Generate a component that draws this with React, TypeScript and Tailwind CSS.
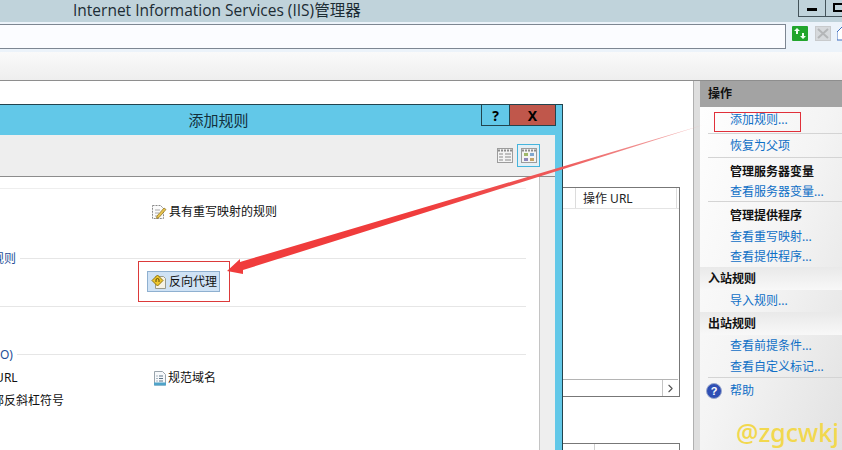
import type { ReactNode } from 'react';
import { ChevronRight } from 'lucide-react';

const cjk = "font-['Noto_Sans','Noto_Sans_CJK_SC',sans-serif]";

// Rows of the actions pane, heights picked so the text lands on the same lines
const actions: { label: string; kind: 'link' | 'sub' | 'head'; h: number; sep?: boolean }[] = [
  { label: '添加规则...', kind: 'link', h: 27, sep: true },
  { label: '恢复为父项', kind: 'link', h: 24, sep: true },
  { label: '管理服务器变量', kind: 'sub', h: 24 },
  { label: '查看服务器变量...', kind: 'link', h: 20, sep: true },
  { label: '管理提供程序', kind: 'sub', h: 25 },
  { label: '查看重写映射...', kind: 'link', h: 20 },
  { label: '查看提供程序...', kind: 'link', h: 20 },
  { label: '入站规则', kind: 'head', h: 23 },
  { label: '导入规则...', kind: 'link', h: 22 },
  { label: '出站规则', kind: 'head', h: 23 },
  { label: '查看前提条件...', kind: 'link', h: 22 },
  { label: '查看自定义标记...', kind: 'link', h: 21, sep: true },
];

function DocPencil() {
  return (
    <svg width="16" height="16" viewBox="0 0 16 16" className="shrink-0">
      <path d="M1.5 1.5h8l3 3v10h-11z" fill="#fbfbfb" stroke="#8a8a8a" strokeDasharray="2 1" />
      <path d="M4 6h5M4 9h4M4 12h3" stroke="#a8a8a8" />
      <path d="M6 12l7-8 2 1.5-7 8-2.5 1z" fill="#e8c44e" stroke="#8a6d1f" strokeWidth="0.7" />
    </svg>
  );
}

function DocSign() {
  return (
    <svg width="16" height="16" viewBox="0 0 16 16" className="shrink-0">
      <path d="M4.5 2.5h8l2 2v10h-10z" fill="#f6f2e4" stroke="#9a9a8a" />
      <path d="M6.5 1l5.5 5.5-5.5 5.5L1 6.500z" fill="#eec62c" stroke="#8d7412" />
      <path d="M5 8V6a1.500 1.500 0 0 1 3 0v2" fill="none" stroke="#5d4a08" />
    </svg>
  );
}

function DocList() {
  return (
    <svg width="14" height="15" viewBox="0 0 14 15" className="shrink-0">
      <path d="M1.500 .5h8l3 3v10.500h-11z" fill="#f7f9fb" stroke="#9aa4ac" />
      <path d="M3.500 5h1M6 5h4M3.500 7.500h1M6 7.500h4M3.500 10h1M6 10h4" stroke="#5c7488" />
      <rect x="1" y="11.500" width="12" height="3" fill="#4fa3c9" />
    </svg>
  );
}

function ViewToggle({ tiles }: { tiles?: boolean }) {
  return (
    <svg width="16" height="15" viewBox="0 0 16 15">
      <rect x=".5" y=".5" width="15" height="14" fill="#f4f4f4" stroke="#9c9c9c" />
      <path d="M1 2.500h14" stroke="#8c8c8c" strokeWidth="2" strokeDasharray="2 1" />
      {tiles ? (
        <g>
          <rect x="3" y="5" width="4" height="3" fill="#9fb86a" />
          <rect x="9" y="5" width="4" height="3" fill="#7fa7cf" />
          <rect x="3" y="10" width="4" height="3" fill="#8d86b8" />
          <rect x="9" y="10" width="4" height="3" fill="#c4a468" />
        </g>
      ) : (
        <path d="M2 6h4M2 9h4M2 12h4M8 6h6M8 9h6M8 12h6" stroke="#8a8a8a" />
      )}
    </svg>
  );
}

function Section({ title, children, line = true }: { title: string; children?: ReactNode; line?: boolean }) {
  return (
    <div className="flex items-center gap-[4px] h-[16px]">
      <span className="mt-[2px] text-[12px] leading-[16px] text-[#1f4f99] whitespace-nowrap">{title}</span>
      {line && <div className="flex-1 h-px bg-[#e6e6e6]" />}
      {children}
    </div>
  );
}

function AddRuleDialog() {
  return (
    <div className={`absolute left-[-100px] top-[23px] bottom-[-60px] w-[663px] flex flex-col bg-[#62c8e8] border-t border-r border-[#22444e] ${cjk}`}>
      <div className="relative h-[30px] shrink-0 flex items-center justify-center pr-[25px]">
        <span className="text-[15px] text-[#12303c]">添加规则</span>
        <div className="absolute top-0 right-[6px] flex h-[21px] border-b border-l border-r border-[#22444e]">
          <div className="w-[28px] flex items-center justify-center border-r border-[#22444e] text-[14px] font-bold text-black">?</div>
          <div className="w-[45px] bg-[#c0574b] flex items-center justify-center text-[14px] font-bold text-black">X</div>
        </div>
      </div>
      <div className="flex-1 mr-[7px] flex flex-col bg-[#eeeeee]">
        <div className="h-[42px] shrink-0 flex items-center justify-end pr-[15px] gap-[4px] border-b border-[#8c8c8c]">
          <ViewToggle />
          <div className="w-[23px] h-[23px] border border-[#45b4dc] bg-[#e4eff5] flex items-center justify-center">
            <ViewToggle tiles />
          </div>
        </div>
        <div className="flex-1 mr-[15px] bg-white border-r border-[#c4c4c4] pl-[8px] pr-[13px]">
          <div className="h-[12px] border-b border-[#eeeeee]" />
          <div className="grid grid-cols-[231px_1fr] h-[44px] pt-[2px] items-center pl-[12px]">
            <span />
            <div className="flex items-center gap-[2px] text-[12px] text-[#111]">
              <DocPencil />
              具有重写映射的规则
            </div>
          </div>
          <div className="mt-[17px]">
            <Section title="入站规则和出站规则" />
          </div>
          <div className="h-[41px] flex items-start pt-[5px] pl-[239px] border-b border-[#e6e6e6]">
            <div className="flex items-center gap-[2px] h-[21px] w-[73px] pl-[3px] bg-[#cfe2f5] border border-[#8fb0d0] text-[12px] text-[#111]">
              <DocSign />
              反向代理
            </div>
          </div>
          <div className="mt-[39px]">
            <Section title="搜索引擎优化 (SEO)" />
          </div>
          <div className="pl-[12px] pt-[2px] grid grid-cols-[233px_1fr] h-[30px] items-center text-[12px] text-[#111]">
            <span className="whitespace-nowrap">强制使用小写 URL</span>
            <div className="flex items-center gap-[1px]">
              <DocList />
              规范域名
            </div>
          </div>
          <div className="pl-[12px] pt-[2px] h-[16px] flex items-center text-[12px] text-[#111] whitespace-nowrap">附加或删除尾部反斜杠符号</div>
        </div>
      </div>
    </div>
  );
}

// The red marks somebody drew over the screenshot
function Annotations() {
  return (
    <svg width="842" height="450" className="absolute inset-0 pointer-events-none">
      <defs>
        <linearGradient id="fade" gradientUnits="userSpaceOnUse" x1="703" y1="125" x2="420" y2="212">
          <stop offset="0" stopColor="#f2b8b8" />
          <stop offset="0.5" stopColor="#ee5a5a" />
          <stop offset="1" stopColor="#f03c3c" />
        </linearGradient>
      </defs>
      <polygon points="227,271 240,259 240,262 703,125 243,270 243,274" fill="url(#fade)" />
      <rect x="138.500" y="261.500" width="91" height="40" fill="none" stroke="#dc3a3a" />
      <rect x="714.500" y="112.500" width="86" height="19" fill="none" stroke="#e0303a" />
    </svg>
  );
}

export default function App() {
  return (
    <div className={`relative w-[842px] h-[450px] overflow-hidden flex flex-col bg-white ${cjk}`}>
      {/* Title bar */}
      <div className="h-[22px] shrink-0 bg-[#c0d3db] flex items-start justify-between pl-[73px]">
        <span className="text-[15.500px] leading-[20px] whitespace-nowrap text-[#1c2c34] font-['Open_Sans','Noto_Sans_CJK_SC',sans-serif]">
          Internet Information Services (IIS)管理器
        </span>
        <div className="flex h-[17px] border-b border-l border-[#44535a]">
          <div className="w-[27px] border-r border-[#44535a] flex items-center justify-center">
            <div className="w-[10px] h-[3px] bg-black mt-[3px]" />
          </div>
          <div className="w-[16px] flex items-start pl-[7px] pt-[3px]">
            <div className="w-[9px] h-[9px] border-2 border-black border-r-0 shrink-0" />
          </div>
        </div>
      </div>

      {/* Address bar */}
      <div className="h-[30px] shrink-0 bg-[#ecf3fa] flex items-start pt-[2px]">
        <div className="w-[786px] h-[25px] shrink-0 bg-[#fbfcff] border-y border-r border-[#7d8692]" />
        <svg width="16" height="16" viewBox="0 0 16 16" className="ml-[6px] mt-[2px] shrink-0">
          <rect width="16" height="15" rx="1" fill="#22a52c" />
          <path d="M5 2L2 5h2v3h2V5h2zM11 13l3-3h-2V7h-2v3H8z" fill="#f2fff2" />
        </svg>
        <svg width="16" height="15" viewBox="0 0 16 15" className="ml-[7px] mt-[2px] shrink-0">
          <rect x=".5" y=".5" width="15" height="14" fill="#d6d9dc" stroke="#c8cacc" />
          <path d="M3 3l10 9M13 3L3 12" stroke="#b4b6b8" strokeWidth="2" />
        </svg>
        <svg width="10" height="15" viewBox="0 0 10 15" className="ml-[6px] mt-[2px] shrink-0">
          <path d="M5 1L0 6v8h8V6z" fill="#fff" stroke="#3f6fc0" />
        </svg>
      </div>

      {/* Toolbar strip */}
      <div className="h-[29px] shrink-0 bg-linear-to-b from-[#fafafa] to-[#eeeeee] border-b border-[#8e8e8e]" />

      <div className="flex-1 flex min-h-0 bg-[#dedede]">
        {/* Feature pane behind the dialog */}
        <div className="relative w-[694px] shrink-0 bg-white border-r border-[#b0b0b0] flex flex-col items-end pr-[13px]">
          <div className="mt-[106px] w-[119px] h-[210px] shrink-0 border border-[#777] border-l-0 flex flex-col">
            <div className="h-[21px] flex border-b border-[#e4e4e4] text-[12px] text-[#222]">
              <div className="w-[15px] border-r border-[#dcdcdc]" />
              <div className="flex-1 pl-[7px] leading-[21px] border-r border-[#dcdcdc] mr-[2px]">操作 URL</div>
            </div>
            <div className="flex-1" />
            <div className="h-[17px] border-t border-[#b4b4b4] flex justify-end mr-[1px]">
              <div className="w-[16px] border-l border-[#c4c4c4] flex items-center justify-center">
                <ChevronRight size={13} className="text-[#555]" />
              </div>
            </div>
          </div>
          <div className="mt-[46px] w-[120px] h-[20px] shrink-0 border-t border-r border-[#777] flex">
            <div className="w-[35px] border-r border-[#cfcfcf]" />
          </div>
          <AddRuleDialog />
        </div>

        {/* Actions pane */}
        <div className="ml-[6px] flex-1 flex flex-col bg-linear-to-br from-white via-[#f4f4f4] to-[#e2e2e2]">
          <div className="h-[26px] shrink-0 bg-[#a3a3a3] pl-[8px] leading-[25px] text-[12px] font-semibold text-[#111]">操作</div>
          {actions.map((a) => (
            <div
              key={a.label}
              style={{ height: a.h }}
              className={`flex items-center text-[12px] whitespace-nowrap ${a.sep ? 'border-b border-[#d4d4d4] ml-[8px]' : ''} ${
                a.kind === 'head'
                  ? 'pl-[8px] font-bold text-[#111] bg-linear-to-b from-[#e9e9e9] to-[#f8f8f8]'
                  : a.kind === 'sub'
                    ? 'pl-[30px] pt-[3px] font-semibold text-[#111]'
                    : `${a.sep ? 'pl-[22px]' : 'pl-[30px]'} text-[#0f6fc6]`
              }`}
            >
              {a.label}
            </div>
          ))}
          <div className="h-[25px] flex items-center pl-[6px] gap-[8px] text-[12px] text-[#0f6fc6]">
            <svg width="16" height="16" viewBox="0 0 16 16">
              <circle cx="8" cy="8" r="7.500" fill="#2f4fb4" stroke="#9aa8cc" />
              <text x="8" y="12" textAnchor="middle" fontSize="11" fontWeight="700" fill="#fff" fontFamily="Liberation Sans, sans-serif">?</text>
            </svg>
            帮助
          </div>
        </div>
      </div>

      {/* Image watermark */}
      <div className="absolute right-[3px] bottom-[3px] text-[25px] leading-[30px] font-medium text-[#f2d84e] font-['Noto_Sans',sans-serif]">@zgcwkj</div>

      <Annotations />
    </div>
  );
}
